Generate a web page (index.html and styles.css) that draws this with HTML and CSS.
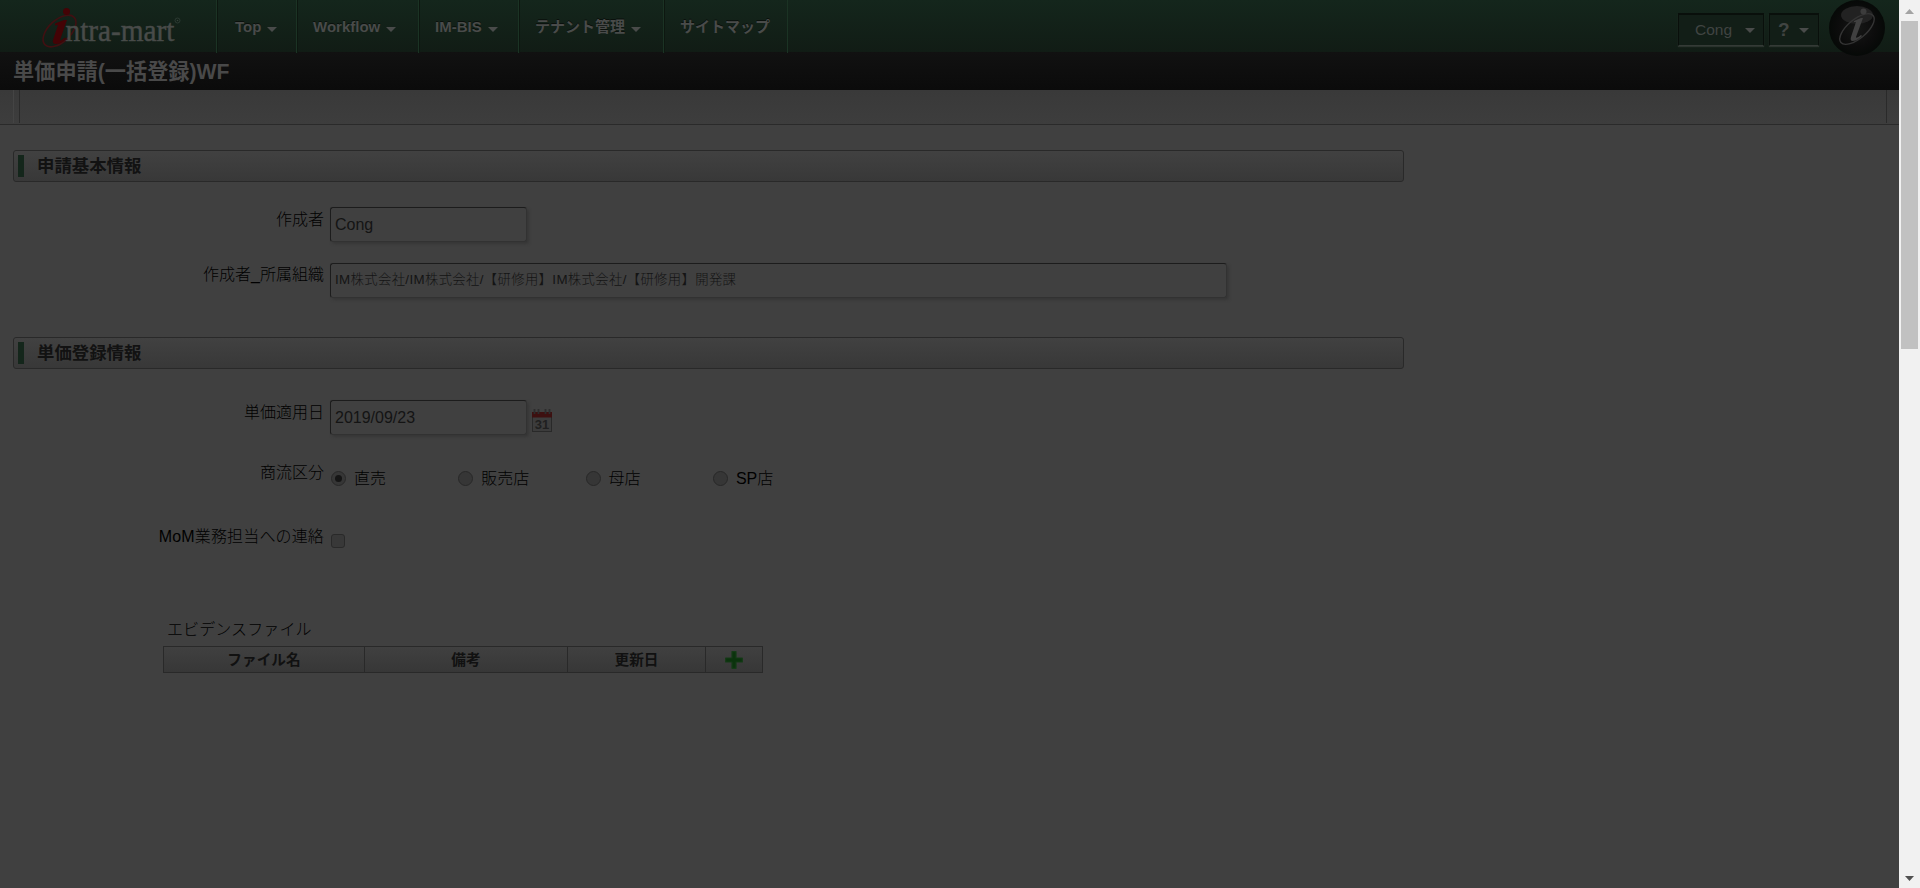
FILE: index.html
```
<!DOCTYPE html>
<html lang="ja">
<head>
<meta charset="utf-8">
<title>単価申請(一括登録)WF</title>
<link rel="stylesheet" href="styles.css">
</head>
<body>
<div class="screen">
<div class="page">
  <header class="header">
    <div class="brand">
      <svg class="logo" width="170" height="52" viewBox="0 0 170 52">
        <ellipse cx="23.500" cy="31" rx="20" ry="11" transform="rotate(-43 23.500 31)" fill="none" stroke="#401012" stroke-width="1.600"/>
        <g fill="#484b49" stroke="#484b49" stroke-width=".5" font-family="Liberation Serif, serif" font-size="32"><text x="29.500" y="41" textLength="109" lengthAdjust="spacingAndGlyphs">ntra-mart</text></g>
        <circle cx="30.500" cy="11.500" r="3.500" fill="#440306"/>
        <path d="M19 23.500l9-3.500h3l-7 20q0 2 5-2.500l1 1q-5 6-11 5.500-3-1-2-4l5-15-3 .5z" fill="#440306"/>
        <circle cx="141.500" cy="20.500" r="2.500" fill="none" stroke="#2c3a32"/><circle cx="141.500" cy="20.500" r=".8" fill="#344139"/>
      </svg>
    </div>
    <nav class="nav">
      <a class="n1">Top<i class="caret"></i></a>
      <a class="n2">Workflow<i class="caret"></i></a>
      <a class="n3">IM-BIS<i class="caret"></i></a>
      <a class="n4">テナント管理<i class="caret"></i></a>
      <a class="n5">サイトマップ</a>
    </nav>
    <div class="tools">
      <div class="tool user">Cong<i class="caret"></i></div>
      <div class="tool help"><b>?</b><i class="caret"></i></div>
      <svg class="orb" width="56" height="56" viewBox="0 0 56 56">
        <defs><radialGradient id="orb"><stop offset="0" stop-color="#161716"/><stop offset=".65" stop-color="#0c0c0c"/><stop offset="1" stop-color="#060907"/></radialGradient></defs>
        <circle cx="28" cy="28" r="28" fill="url(#orb)"/>
        <ellipse cx="28" cy="15" rx="16" ry="9" fill="#222"/>
        <ellipse cx="28" cy="29" rx="21" ry="9.500" transform="rotate(-40 28 29)" fill="none" stroke="#343434" stroke-width="1.400"/>
        <circle cx="34.500" cy="11.500" r="3" fill="#3c3c3c"/>
        <path d="M25 21l7-3h2l-7 19q0 2 5-2l1 1q-5 5-10 5-2-1-1-4l5-15-2 0z" fill="#404040"/>
      </svg>
    </div>
  </header>
  <div class="titlebar"><h1>単価申請(一括登録)WF</h1></div>
  <div class="toolbar"><div class="toolbar-inner"></div></div>
  <main class="main">
    <h2 class="section">申請基本情報</h2>
    <div class="row author">
      <label>作成者</label><div class="field short">Cong</div>
    </div>
    <div class="row org">
      <label>作成者_所属組織</label><div class="field long">IM株式会社/IM株式会社/【研修用】IM株式会社/【研修用】開発課</div>
    </div>
    <h2 class="section second">単価登録情報</h2>
    <div class="row date">
      <label>単価適用日</label><div class="field short">2019/09/23</div>
      <svg class="calendar" width="20" height="24" viewBox="0 0 20 24">
        <rect x=".5" y="5" width="19" height="17.500" fill="#3c3c3c" stroke="#292929"/>
        <rect y="3" width="20" height="5.500" fill="#3d1010"/>
        <path d="M2.500 0v5M6.500 0v5M13.500 0v5M17.500 0v5" stroke="#2c2c2c" stroke-width="1.800"/>
        <g fill="#202020" font-family="Liberation Sans, sans-serif" font-size="13" font-weight="700"><text x="2.800" y="20">31</text></g>
      </svg>
    </div>
    <div class="row flow">
      <label>商流区分</label>
      <div class="radios">
        <span class="option"><i class="radio on"></i><span>直売</span></span>
        <span class="option"><i class="radio"></i><span>販売店</span></span>
        <span class="option"><i class="radio"></i><span>母店</span></span>
        <span class="option"><i class="radio"></i><span>SP店</span></span>
      </div>
    </div>
    <div class="row contact">
      <label>MoM業務担当への連絡</label><i class="checkbox"></i>
    </div>
    <div class="evidence">
      <div class="caption">エビデンスファイル</div>
      <div class="grid">
        <div>ファイル名</div><div>備考</div><div>更新日</div>
        <div><svg width="18" height="18" viewBox="0 0 18 18"><path d="M7 .7h4v6.300h6.300v4h-6.300v6.300h-4v-6.300H.7v-4h6.300z" fill="#0b330d" stroke="#153b17" stroke-width="1.200" stroke-linejoin="round"/></svg></div>
      </div>
    </div>
  </main>
</div>
<div class="scrollbar">
  <svg class="arrow" width="9" height="5" viewBox="0 0 9 5"><path d="M0 5L4.500 0 9 5z" fill="#a3a3a3"/></svg>
  <div class="thumb"></div>
  <svg class="arrow down" width="9" height="5" viewBox="0 0 9 5"><path d="M0 0h9L4.500 5z" fill="#505050"/></svg>
</div>
</div>
</body>
</html>
```
FILE: styles.css
```
* { box-sizing: border-box; }
body { margin: 0; background: #404040; color: #000; font: 300 16px/20px "Liberation Sans", "Noto Sans CJK JP", sans-serif; }
.screen { display: flex; width: 1920px; height: 888px; overflow: hidden; }
.page { width: 1899px; background: #404040; }

.header { display: flex; height: 52px; background: linear-gradient(#14261c, #111c15); position: relative; }
.brand { width: 216px; padding-left: 36px; flex: none; }
.logo { display: block; }
.nav { display: flex; height: 53px; border-left: 1px solid #1b3324; }
.nav a { display: flex; align-items: center; height: 53px; padding: 1px 0 0 15px; border-left: 1px solid #0d1710; border-right: 1px solid #1b3324; color: #494b4a; font-size: 15px; font-weight: 700; text-shadow: 0 -1px #0a100c; white-space: nowrap; }
.nav .n1 { width: 80px; padding-left: 17px; }
.n2 { width: 122px; }
.n3 { width: 100px; }
.n4 { width: 145px; }
.n5 { width: 124px; }
.caret { width: 0; height: 0; border: solid transparent; border-width: 5px 5px 0; border-top-color: #494b4a; margin: 5px 0 0 6px; }
.tools { display: flex; margin-left: auto; padding-right: 14px; height: 56px; position: relative; }
.tool { display: flex; align-items: center; height: 33px; margin: 13px 5px 0 0; border: 1px solid #090f0b; border-top-width: 2px; border-bottom: 1px solid #343a36; box-shadow: 0 1px 1px #2a332d; background: #121e17; color: #404442; font-size: 15.5px; font-weight: 400; }
.tool .caret { margin: 0; border-top-color: #494b4a; }
.user { width: 86px; padding-left: 16px; }
.user .caret { margin-left: 13px; }
.help { width: 50px; padding-left: 8px; margin-right: 10px; }
.help b { font-size: 19px; }
.help .caret { margin-left: 9px; }
.orb { display: block; }

.titlebar { height: 38px; background: linear-gradient(#111, #0b0b0b); padding: 5px 13px 0; }
.titlebar h1 { margin: 0; font-size: 21.2px; line-height: 30px; color: #494949; }
.toolbar { height: 35px; padding: 0 12px 0 13px; border-bottom: 1px solid #2a2a2a; background: linear-gradient(#393939, #3d3d3d); }
.toolbar-inner { height: 33px; border-left: 1px solid #444; padding-left: 5px; border-right: 1px solid #2a2a2a; }
.toolbar-inner::before { content: ""; display: block; height: 33px; border-left: 1px solid #2a2a2a; }

.main { padding: 25px 0 0 13px; }
.section { width: 1391px; height: 32px; margin: 0; padding: 0 0 1px 4px; display: flex; align-items: center; border: 1px solid #292929; border-radius: 3px; background: linear-gradient(#414141, #383838); color: #121212; font-size: 17.4px; line-height: 28px; font-weight: 700; }
.section::before { content: ""; width: 6px; height: 22px; margin-right: 13px; background: #14261b; }
.second { margin-top: 40px; }
.row { display: flex; align-items: flex-start; }
.row label { width: 311px; margin: 3px 6px 0 0; text-align: right; white-space: nowrap; }
.field { height: 35px; padding: 0 4px; border: 1px solid #1c1c1c; border-right-color: #323232; border-bottom-color: #323232; border-radius: 3px; box-shadow: 2px 2px 3px #363636; line-height: 33px; font-weight: 400; color: #141414; white-space: nowrap; }
.short { width: 197px; }
.long { width: 897px; font-size: 13.33px; font-weight: 300; letter-spacing: .37px; line-height: 31px; }
.author { padding-top: 25px; height: 81px; }
.org { height: 34px; }
.row.org label { margin-top: 2px; }
.date { padding-top: 31px; height: 94px; }
.calendar { margin: 9px 0 0 5px; }
.row.flow label, .row.contact label { margin-top: 0; }
.contact label { letter-spacing: .15px; }
.flow { height: 64px; }
.radios { display: flex; padding: 5px 0 0 1px; }
.option { width: 127.300px; display: flex; align-items: center; }
.option span { padding-top: 1px; }
.radio { width: 15px; height: 15px; margin: -1px 8px 0 0; border: 1px solid #282828; border-radius: 50%; background: #363636; display: grid; place-items: center; }
.on::after { content: ""; width: 7px; height: 7px; border-radius: 50%; background: #151515; }
.checkbox { width: 14px; height: 14px; margin: 7px 0 0 1px; border: 1px solid #292929; border-radius: 3px; background: #383838; }
.evidence { padding: 71px 0 0 150px; }
.caption { padding-left: 4px; height: 27px; line-height: 22px; letter-spacing: .1px; }
.grid { display: grid; grid-template-columns: 201px 203px 138px 57px; width: 600px; height: 27px; border: 1px solid #292929; border-right: 0; background: linear-gradient(#404040, #373737); color: #111; font-size: 14.67px; font-weight: 700; }
.grid > div { display: flex; align-items: center; justify-content: center; border-right: 1px solid #292929; }

.scrollbar { width: 21px; height: 888px; padding: 9px 2px 7px; background: #f1f1f1; display: flex; flex-direction: column; align-items: center; }
.thumb { width: 17px; height: 328px; margin-top: 7px; background: #c1c1c1; }
.down { margin-top: auto; }
```
